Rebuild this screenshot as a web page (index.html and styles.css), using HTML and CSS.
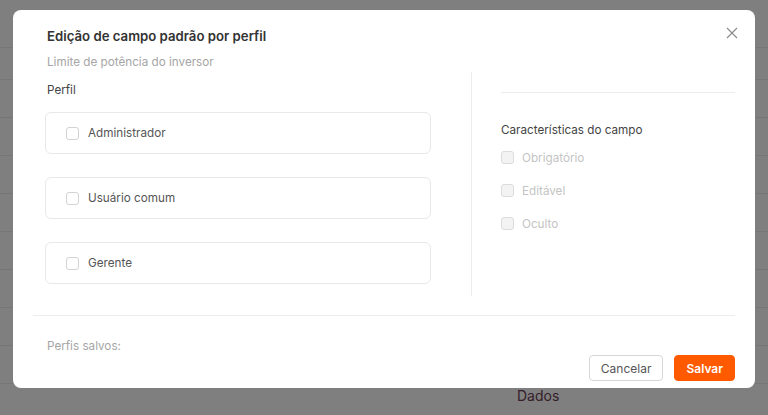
FILE: index.html
```
<!DOCTYPE html>
<html lang="pt-BR">
<head>
    <meta charset="UTF-8">
    <meta name="viewport" content="width=device-width, initial-scale=1.0">
    <title>Edição de campo padrão por perfil</title>
    <link rel="stylesheet" href="styles.css">
</head>
<body>

    <!-- Page behind the modal -->
    <div class="page">
        <div class="page-head"></div>
        <div class="page-row first"></div>
        <div class="page-row"></div>
        <div class="page-row"></div>
        <div class="page-row"></div>
        <div class="page-row"></div>
        <div class="page-row"></div>
        <div class="page-row"></div>
        <div class="page-row"></div>
        <div class="page-row"></div>
        <div class="page-row last"><span class="page-cell">Dados</span></div>
    </div>

    <div class="overlay">
        <div class="modal">
            <button class="close-btn" aria-label="Fechar">
                <svg width="12" height="12" viewBox="0 0 12 12">
                    <path d="M1 1L11 11M11 1L1 11" stroke="#8c8c8c" stroke-width="1.2" fill="none"/>
                </svg>
            </button>

            <div class="modal-header">
                <h2>Edição de campo padrão por perfil</h2>
                <p class="subtitle">Limite de potência do inversor</p>
            </div>

            <div class="modal-body">
                <div class="col-left">
                    <div class="label">Perfil</div>
                    <label class="profile-card">
                        <span class="check"></span>
                        <span>Administrador</span>
                    </label>
                    <label class="profile-card">
                        <span class="check"></span>
                        <span>Usuário comum</span>
                    </label>
                    <label class="profile-card">
                        <span class="check"></span>
                        <span>Gerente</span>
                    </label>
                </div>

                <div class="col-right">
                    <div class="rule"></div>
                    <div class="label">Características do campo</div>
                    <label class="option disabled">
                        <span class="check"></span>
                        <span>Obrigatório</span>
                    </label>
                    <label class="option disabled">
                        <span class="check"></span>
                        <span>Editável</span>
                    </label>
                    <label class="option disabled">
                        <span class="check"></span>
                        <span>Oculto</span>
                    </label>
                </div>
            </div>

            <div class="modal-footer">
                <div class="saved">Perfis salvos:</div>
                <div class="actions">
                    <button class="btn btn-default">Cancelar</button>
                    <button class="btn btn-primary">Salvar</button>
                </div>
            </div>
        </div>
    </div>

</body>
</html>
```

FILE: styles.css
```
body, html {
    margin: 0;
    padding: 0;
    height: 100%;
    font-family: Inter, "Noto Sans", Arial, sans-serif;
    background-color: #fff;
    overflow: hidden;
}

/* Table-like page under the overlay */
.page-head {
    height: 47px;
    border-bottom: 1px solid #ececec;
}

.page-row {
    height: 37px;
    border-bottom: 1px solid #ececec;
}

.page-row.first {
    height: 31px;
}

.page-row.last {
    border-bottom: none;
}

.page-cell {
    display: inline-block;
    margin: 3px 0 0 517px;
    font-size: 14px;
    color: #6a3c52;
}

.overlay {
    position: fixed;
    inset: 0;
    background: rgba(0, 0, 0, 0.5);
}

.modal {
    position: absolute;
    top: 10px;
    left: 13px;
    width: 742px;
    height: 378px;
    background: #fff;
    border-radius: 8px;
    box-sizing: border-box;
    display: flex;
    flex-direction: column;
}

.close-btn {
    position: absolute;
    top: 17px;
    right: 17px;
    width: 12px;
    height: 12px;
    padding: 0;
    border: none;
    background: none;
    cursor: pointer;
}

.close-btn svg {
    display: block;
}

.modal-header {
    padding: 17px 34px 0;
}

.modal-header h2 {
    margin: 0;
    font-size: 13.2px;
    line-height: 18px;
    font-weight: 600;
    color: #333;
}

.subtitle {
    margin: 9px 0 0;
    font-size: 11.7px;
    line-height: 16px;
    color: #a6a6a6;
}

.modal-body {
    display: flex;
    margin: 2px 20px 0;
    height: 224px;
}

.col-left {
    width: 386px;
    padding: 10px 40px 0 12px;
    border-right: 1px solid #ececec;
}

.col-right {
    flex: 1;
    padding: 20px 0 0 29px;
}

.label {
    font-size: 11.7px;
    line-height: 16px;
    color: #444;
}

.col-left .label {
    margin-left: 2px;
    margin-bottom: 14px;
}

.profile-card {
    display: flex;
    align-items: center;
    gap: 9px;
    height: 42px;
    box-sizing: border-box;
    padding: 0 20px;
    margin-bottom: 23px;
    border: 1px solid #e8e8e8;
    border-radius: 6px;
    font-size: 11.7px;
    color: #555;
    cursor: pointer;
}

.check {
    width: 13px;
    height: 13px;
    box-sizing: border-box;
    border: 1px solid #d3d3d3;
    border-radius: 3px;
    background: #fff;
    flex-shrink: 0;
}

.rule {
    height: 1px;
    background: #ececec;
    margin-bottom: 29px;
}

.col-right .label {
    margin-bottom: 11px;
}

.option {
    display: flex;
    align-items: center;
    gap: 8px;
    height: 17px;
    margin-bottom: 16px;
    font-size: 11.7px;
}

.option.disabled {
    color: #c4c4c4;
}

.option.disabled .check {
    background: #f3f3f3;
    border-color: #dcdcdc;
}

.modal-footer {
    margin: 19px 20px 0;
    border-top: 1px solid #ececec;
    padding: 22px 0 0 14px;
}

.saved {
    font-size: 11.7px;
    line-height: 16px;
    color: #a6a6a6;
}

.actions {
    display: flex;
    justify-content: flex-end;
    gap: 11px;
    margin-top: 1px;
}

.btn {
    height: 26px;
    padding: 0 11px;
    border-radius: 4px;
    font-family: inherit;
    font-size: 12px;
    cursor: pointer;
}

.btn-default {
    background: #fff;
    border: 1px solid #d6d6d6;
    color: #555;
}

.btn-primary {
    background: #ff5a00;
    border: 1px solid #ff5a00;
    color: #fff;
    font-weight: 600;
}
```
